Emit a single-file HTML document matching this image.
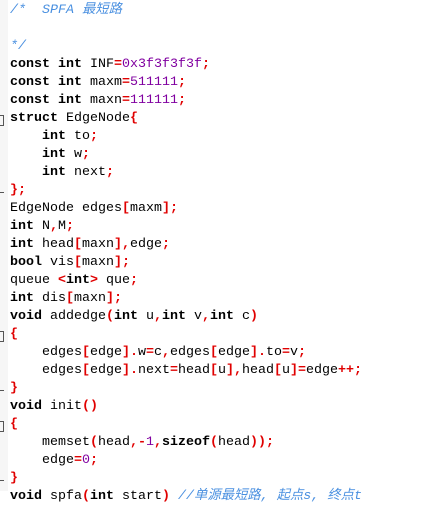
<!DOCTYPE html>
<html><head><meta charset="utf-8"><style>
html,body{margin:0;padding:0;background:#fff;width:422px;height:491px;overflow:hidden}
.g{position:absolute;left:0;top:0;width:8px;height:491px;background:#f6f6f6}
pre{position:absolute;left:10px;top:2px;margin:0;font-family:"Liberation Mono","Noto Sans CJK SC",monospace;font-size:13.33px;line-height:18px;color:#000}
b{font-weight:bold}
.o{color:#e00000;font-weight:bold}
.n{color:#8000a0}
.c{color:#4a90e0;font-style:italic}
.m{position:absolute;left:0;width:3px;height:9px;border:1px solid #555;border-left:none}
.d{position:absolute;left:0;width:4px;height:1px;background:#555}
</style></head><body>
<div class="g"></div>
<div class="m" style="top:115px"></div>
<div class="d" style="top:192px"></div>
<div class="m" style="top:331px"></div>
<div class="d" style="top:390px"></div>
<div class="m" style="top:421px"></div>
<div class="d" style="top:480px"></div>
<pre><span class="c">/*  SPFA 最短路</span>

<span class="c">*/</span>
<b>const</b> <b>int</b> INF<span class="o">=</span><span class="n">0x3f3f3f3f</span><span class="o">;</span>
<b>const</b> <b>int</b> maxm<span class="o">=</span><span class="n">511111</span><span class="o">;</span>
<b>const</b> <b>int</b> maxn<span class="o">=</span><span class="n">111111</span><span class="o">;</span>
<b>struct</b> EdgeNode<span class="o">{</span>
    <b>int</b> to<span class="o">;</span>
    <b>int</b> w<span class="o">;</span>
    <b>int</b> next<span class="o">;</span>
<span class="o">};</span>
EdgeNode edges<span class="o">[</span>maxm<span class="o">];</span>
<b>int</b> N<span class="o">,</span>M<span class="o">;</span>
<b>int</b> head<span class="o">[</span>maxn<span class="o">],</span>edge<span class="o">;</span>
<b>bool</b> vis<span class="o">[</span>maxn<span class="o">];</span>
queue <span class="o">&lt;</span><b>int</b><span class="o">&gt;</span> que<span class="o">;</span>
<b>int</b> dis<span class="o">[</span>maxn<span class="o">];</span>
<b>void</b> addedge<span class="o">(</span><b>int</b> u<span class="o">,</span><b>int</b> v<span class="o">,</span><b>int</b> c<span class="o">)</span>
<span class="o">{</span>
    edges<span class="o">[</span>edge<span class="o">].</span>w<span class="o">=</span>c<span class="o">,</span>edges<span class="o">[</span>edge<span class="o">].</span>to<span class="o">=</span>v<span class="o">;</span>
    edges<span class="o">[</span>edge<span class="o">].</span>next<span class="o">=</span>head<span class="o">[</span>u<span class="o">],</span>head<span class="o">[</span>u<span class="o">]=</span>edge<span class="o">++;</span>
<span class="o">}</span>
<b>void</b> init<span class="o">()</span>
<span class="o">{</span>
    memset<span class="o">(</span>head<span class="o">,-</span><span class="n">1</span><span class="o">,</span><b>sizeof</b><span class="o">(</span>head<span class="o">));</span>
    edge<span class="o">=</span><span class="n">0</span><span class="o">;</span>
<span class="o">}</span>
<b>void</b> spfa<span class="o">(</span><b>int</b> start<span class="o">)</span> <span class="c">//单源最短路, 起点s, 终点t</span>
</pre>
</body></html>
